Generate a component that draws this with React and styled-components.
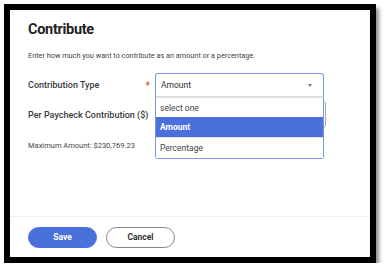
import React from "react"
import styled, {createGlobalStyle} from "styled-components"

const GlobalStyle = createGlobalStyle`
  html, body {
    margin: 0;
    padding: 0;
    background: #fff;
  }
  body {
    font-family: Roboto, "Liberation Sans", sans-serif;
    color: #333;
  }
`

const Frame = styled.div`
  margin: 4px 0 0 4px;
  width: 360px;
  height: 247px;
  border: 6px solid #000;
  box-shadow: 3px 4px 4px rgba(0, 0, 0, 0.45);
  background: #fff;
  display: flex;
  flex-direction: column;
`

const Body = styled.div`
  flex: 1;
  padding: 11px 18px 0;
`

const Title = styled.h2`
  margin: 0;
  font-size: 14.5px;
  font-weight: 700;
  color: #222;
  letter-spacing: -0.3px;
`

const Intro = styled.p`
  margin: 13px 0 0;
  font-size: 7.3px;
  color: #444;
`

const Form = styled.div`
  margin-top: 13px;
  display: grid;
  grid-template-columns: 127px 169px;
  row-gap: 4px;
  align-items: center;
`

const Label = styled.label`
  position: relative;
  font-size: 9px;
  font-weight: 500;
  color: #3a3a3a;
  height: ${p => p.$h || 24}px;
  display: flex;
  align-items: center;
`

const Required = styled.span`
  position: absolute;
  right: 5px;
  top: 7px;
  color: #d9534f;
  font-size: 10px;
`

const Field = styled.div`
  position: relative;
  height: ${p => p.$h || 24}px;
`

const SelectBox = styled.div`
  box-sizing: border-box;
  height: 24px;
  border: 1px solid #7896e4;
  border-bottom-color: #ddd;
  border-radius: 3px 3px 0 0;
  padding: 0 11px 0 5px;
  display: flex;
  align-items: center;
  justify-content: space-between;
  font-size: 8.5px;
  color: #333;
  background: #fff;
`

const Arrow = styled.span`
  width: 0;
  height: 0;
  border-left: 2.5px solid transparent;
  border-right: 2.5px solid transparent;
  border-top: 3.5px solid #777;
`

const Menu = styled.ul`
  position: absolute;
  top: 24px;
  left: 0;
  right: 0;
  z-index: 2;
  margin: 0;
  padding: 0;
  list-style: none;
  box-sizing: border-box;
  border: 1px solid #7896e4;
  border-top: none;
  border-radius: 0 0 3px 3px;
  background: #fff;
`

const Option = styled.li`
  box-sizing: border-box;
  height: ${p => p.$last ? 21 : 20}px;
  display: flex;
  align-items: center;
  padding: 0 4px;
  font-size: 8.5px;
  font-weight: ${p => p.$active ? 700 : 400};
  color: ${p => p.$active ? "#fff" : "#444"};
  background: ${p => p.$active ? "#4a70dc" : "#fff"};
  border-top: ${p => p.$active ? "none" : "1px solid #e2e2e2"};
`

const Input = styled.div`
  box-sizing: border-box;
  height: 27px;
  width: 171px;
  border: 1px solid #aaa;
  border-radius: 3px;
`

const Note = styled.div`
  font-size: 7.5px;
  color: #444;
  height: ${p => p.$h}px;
  display: flex;
  align-items: center;
`

const Footer = styled.div`
  border-top: 1px solid #eee;
  height: 40px;
  padding: 0 18px;
  display: flex;
  align-items: center;
  gap: 9px;
`

const Button = styled.button`
  box-sizing: border-box;
  width: 69px;
  height: 21px;
  border-radius: 11px;
  font-family: inherit;
  font-size: 8.5px;
  font-weight: 700;
  cursor: pointer;
  color: ${p => p.$primary ? "#fff" : "#333"};
  background: ${p => p.$primary ? "#4a70dc" : "#fff"};
  border: ${p => p.$primary ? "1px solid #4a70dc" : "1px solid #888"};
`

export default function App() {
  return (
    <>
      <GlobalStyle />
      <Frame>
        <Body>
          <Title>Contribute</Title>
          <Intro>Enter how much you want to contribute as an amount or a percentage.</Intro>
          <Form>
            <Label>
              Contribution Type
              <Required>*</Required>
            </Label>
            <Field>
              <SelectBox>
                <span>Amount</span>
                <Arrow />
              </SelectBox>
              <Menu>
                <Option>select one</Option>
                <Option $active>Amount</Option>
                <Option $last>Percentage</Option>
              </Menu>
            </Field>
            <Label $h={27}>Per Paycheck Contribution ($)</Label>
            <Field $h={27}>
              <Input />
            </Field>
            <Note $h={26}>Maximum Amount: $230,769.23</Note>
            <div />
          </Form>
        </Body>
        <Footer>
          <Button $primary>Save</Button>
          <Button>Cancel</Button>
        </Footer>
      </Frame>
    </>
  )
}
